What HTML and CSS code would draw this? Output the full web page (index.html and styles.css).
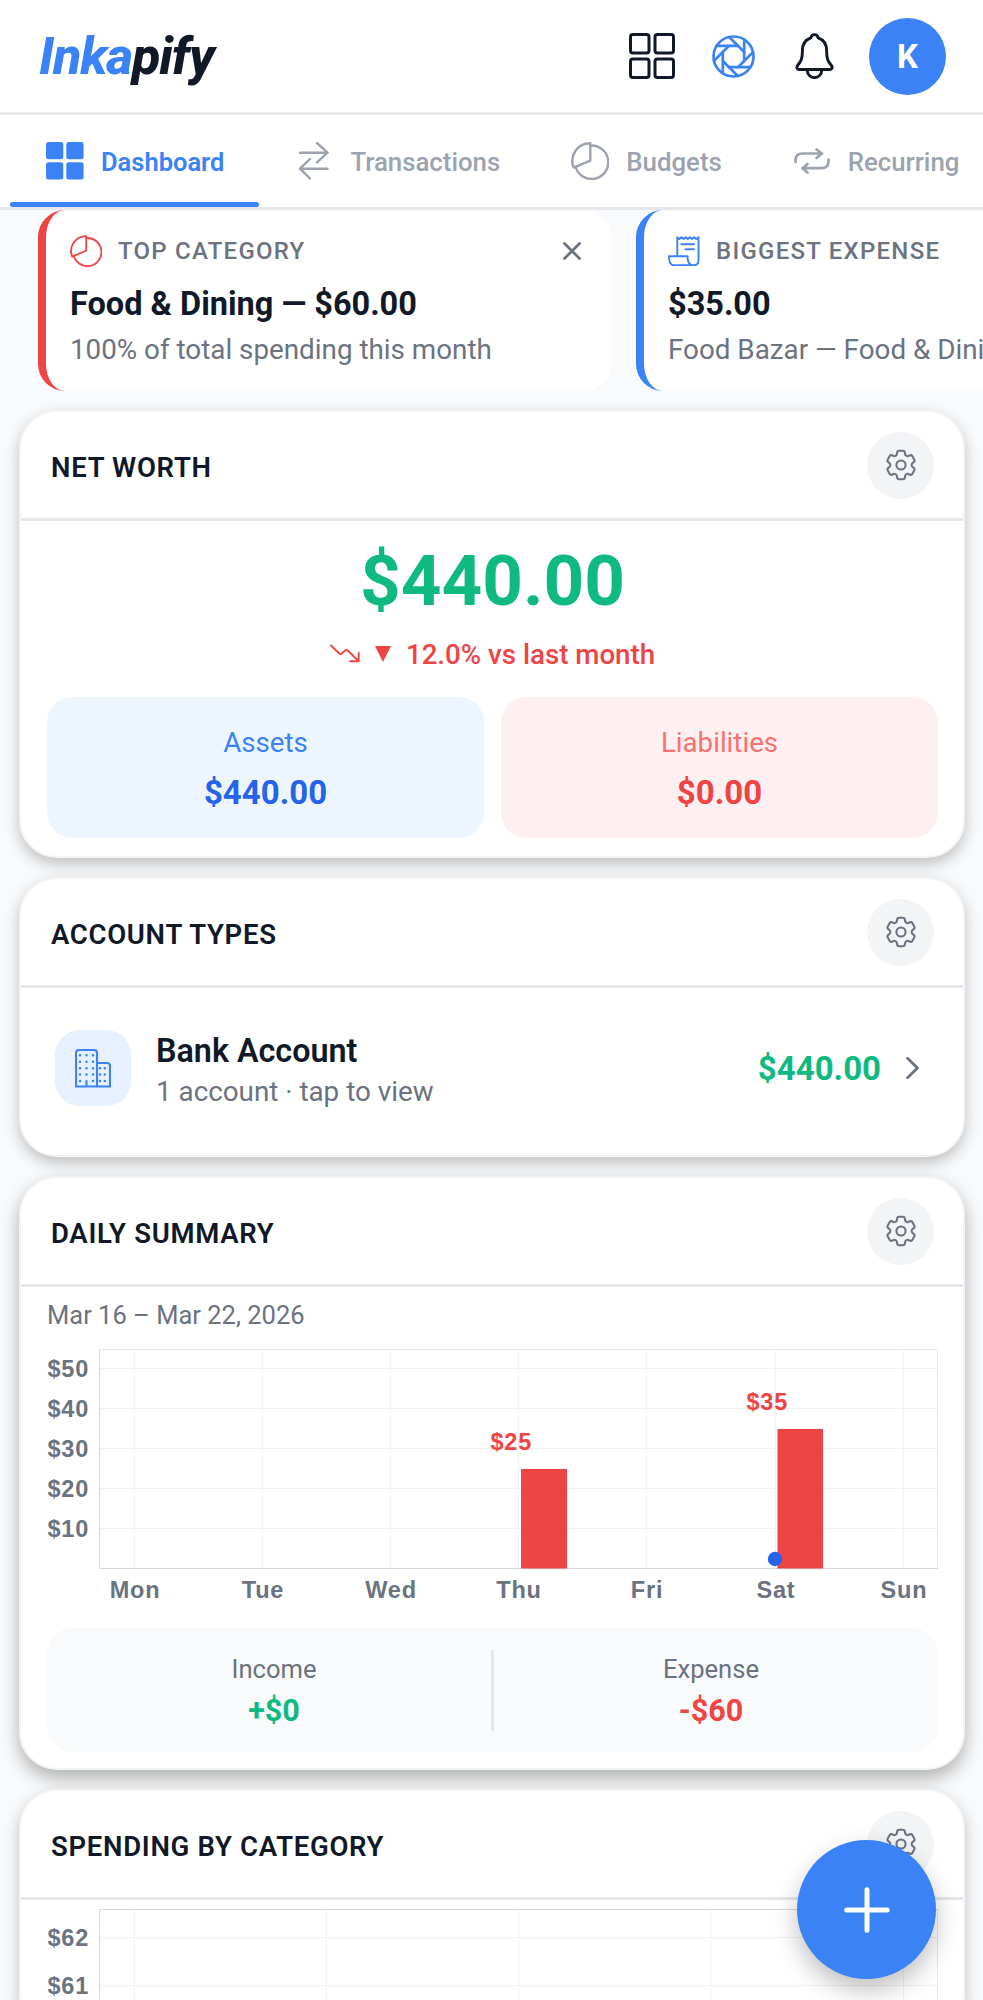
FILE: index.html
```html
<!DOCTYPE html>
<html lang="en">
<head>
  <meta charset="UTF-8" />
  <meta name="viewport" content="width=device-width, initial-scale=1.0"/>
  <title>Inkapify</title>
  <link rel="stylesheet" href="styles.css">
</head>
<body>
  <svg class="sprite" width="0" height="0">
    <symbol id="gear" viewBox="0 0 24 24">
      <path d="M9.594 3.94c.09-.542.56-.94 1.11-.94h2.593c.55 0 1.02.398 1.11.94l.213 1.281c.063.374.313.686.645.87.074.04.147.083.22.127.325.196.72.257 1.075.124l1.217-.456a1.125 1.125 0 0 1 1.37.49l1.296 2.247a1.125 1.125 0 0 1-.26 1.431l-1.003.827c-.293.241-.438.613-.43.992a7.723 7.723 0 0 1 0 .255c-.008.378.137.75.43.991l1.004.827c.424.35.534.955.26 1.43l-1.298 2.247a1.125 1.125 0 0 1-1.369.491l-1.217-.456c-.355-.133-.75-.072-1.076.124a6.47 6.47 0 0 1-.22.128c-.331.183-.581.495-.644.869l-.213 1.281c-.09.543-.56.94-1.11.94h-2.594c-.55 0-1.019-.398-1.11-.94l-.213-1.281c-.062-.374-.312-.686-.644-.87a6.52 6.52 0 0 1-.22-.127c-.325-.196-.72-.257-1.076-.124l-1.217.456a1.125 1.125 0 0 1-1.369-.49l-1.297-2.247a1.125 1.125 0 0 1 .26-1.431l1.004-.827c.292-.24.437-.613.43-.991a6.932 6.932 0 0 1 0-.255c.007-.38-.138-.751-.43-.992l-1.004-.827a1.125 1.125 0 0 1-.26-1.43l1.297-2.247a1.125 1.125 0 0 1 1.37-.491l1.216.456c.356.133.751.072 1.076-.124.072-.044.146-.086.22-.128.332-.183.582-.495.644-.869l.214-1.28Z"/>
      <circle cx="12" cy="12" r="2.9"/>
    </symbol>
    <symbol id="pie" viewBox="0 0 38 38">
      <path d="M19.3 18.7V1.3A17.7 17.7 0 0 0 2.6 25.6Z"/>
      <path d="M19.3 3.6A16.7 16.7 0 1 1 4.6 25"/>
    </symbol>
  </svg>

  <header class="header">
    <div class="logo"><span>Inka</span>pify</div>
    <div class="header-icons">
      <svg class="icon dark" width="46" height="46" viewBox="0 0 46 46" stroke-width="3">
        <rect x="1.5" y="1.5" width="18.5" height="18.5" rx="2.5"/>
        <rect x="26" y="1.5" width="18.5" height="18.5" rx="2.5"/>
        <rect x="1.5" y="26" width="18.5" height="18.5" rx="2.5"/>
        <rect x="26" y="26" width="18.5" height="18.5" rx="2.5"/>
      </svg>
      <svg class="icon blue" width="43" height="43" viewBox="-21.5 -21.5 43 43" stroke-width="2.7">
        <circle r="20"/>
        <path id="blade" d="M4.4-10.7H-16.9"/>
        <use href="#blade" transform="rotate(45)"/>
        <use href="#blade" transform="rotate(90)"/>
        <use href="#blade" transform="rotate(135)"/>
        <use href="#blade" transform="rotate(180)"/>
        <use href="#blade" transform="rotate(225)"/>
        <use href="#blade" transform="rotate(270)"/>
        <use href="#blade" transform="rotate(315)"/>
      </svg>
      <svg class="icon dark" width="39" height="46" viewBox="0 0 39 46" stroke-width="2.9">
        <path d="M19.5 1.6c-2.3 0-3.3 1.5-3.7 3.3C10.5 6.8 7.4 11.3 7.4 17.500c0 8.500-1.300 10.500-4.500 14.500C1 34.500 1.900 36.500 4 36.500h31c2.100 0 3-2 1.100-4.500-3.200-4-4.500-6-4.500-14.500 0-6.200-3.100-10.700-8.400-12.600-.4-1.800-1.400-3.300-3.700-3.300Z"/>
        <path d="M12.3 36.8v.8a7.2 7 0 0 0 14.4 0v-.8"/>
      </svg>
      <div class="avatar">K</div>
    </div>
  </header>

  <nav class="tabs">
    <a class="tab active">
      <svg width="38" height="38" viewBox="0 0 38 38" fill="currentColor">
        <rect width="17.3" height="17.3" rx="2.5"/>
        <rect x="20.3" width="17.3" height="17.3" rx="2.5"/>
        <rect y="20.3" width="17.3" height="17.3" rx="2.5"/>
        <rect x="20.3" y="20.3" width="17.3" height="17.3" rx="2.5"/>
      </svg>
      <span>Dashboard</span>
    </a>
    <a class="tab">
      <svg class="icon" width="38" height="38" viewBox="-4 0 38 38" stroke-width="2.4">
        <path d="M1 10.7H28.5M18 1L28.5 10.7L18 20.3M28.5 26.7H1M11 17L1 26.7L11 36.5"/>
      </svg>
      <span>Transactions</span>
    </a>
    <a class="tab">
      <svg class="icon" width="38" height="38" stroke-width="2.4"><use href="#pie"/></svg>
      <span>Budgets</span>
    </a>
    <a class="tab">
      <svg class="icon" width="38" height="38" viewBox="-1.5 -6.5 38 38" stroke-width="2.7">
        <path d="M1 13.5V12Q1 5 8 5H27.5M22 1L27.5 5L22 9.5M34 11V12.5Q34 19.7 27 19.7H8M13 15.5L8 19.7L13 24"/>
      </svg>
      <span>Recurring</span>
    </a>
  </nav>

  <div class="insights">
    <div class="insight red-edge">
      <div class="insight-top">
        <svg class="icon red" width="32" height="32" stroke-width="2.2"><use href="#pie"/></svg>
        <span>TOP CATEGORY</span>
        <svg class="icon close" width="18" height="18" viewBox="0 0 18 18" stroke-width="2.8"><path d="M1.5 1.5l15 15M16.5 1.5l-15 15"/></svg>
      </div>
      <div class="insight-title">Food &amp; Dining — $60.00</div>
      <div class="insight-sub">100% of total spending this month</div>
    </div>
    <div class="insight blue-edge">
      <div class="insight-top">
        <svg class="icon blue" width="32" height="30" viewBox="0 0 32 30" stroke-width="1.9">
          <path d="M9.3 20V1.2l2.1 1.8 2.1-1.8 2.1 1.8 2.1-1.8 2.1 1.8 2.1-1.8 2.1 1.8 2.1-1.8 2.1 1.8 2.3-1.8V24.5c0 3-1.8 4.7-4.7 4.7H5.8C2.4 29.2 1 25 1 20.3H19.5c0 5.2 1.5 8.9 5.5 8.9"/>
          <path d="M13.3 8.3H26M17.5 13.2H26"/>
        </svg>
        <span>BIGGEST EXPENSE</span>
      </div>
      <div class="insight-title">$35.00</div>
      <div class="insight-sub">Food Bazar — Food &amp; Dining</div>
    </div>
  </div>

  <section class="card net-worth">
    <div class="card-header">
      <h2>NET WORTH</h2>
      <button class="gear"><svg class="icon" width="38" height="38" stroke-width="1.3"><use href="#gear"/></svg></button>
    </div>
    <div class="card-body">
      <div class="total">$440.00</div>
      <div class="trend">
        <svg class="icon" width="30" height="20" viewBox="0 0 30 20" stroke-width="1.9"><path d="M1 1.5L9.5 9.8Q10.5 10.6 11.5 9.8L15.5 6.2Q16.5 5.4 17.5 6.2L28.5 17M28.7 9V17.3H20"/></svg>
        <svg width="16" height="16" viewBox="0 0 16 16" fill="currentColor"><path d="M0 0h16L8 16z"/></svg>
        <span>12.0% vs last month</span>
      </div>
      <div class="split">
        <div class="box assets"><p>Assets</p><b>$440.00</b></div>
        <div class="box liabilities"><p>Liabilities</p><b>$0.00</b></div>
      </div>
    </div>
  </section>

  <section class="card accounts">
    <div class="card-header">
      <h2>ACCOUNT TYPES</h2>
      <button class="gear"><svg class="icon" width="38" height="38" stroke-width="1.3"><use href="#gear"/></svg></button>
    </div>
    <div class="account-row">
      <div class="tile">
        <svg class="icon blue" width="36" height="39" viewBox="0 0 36 39" stroke-width="2.1">
          <path d="M1 37.5V4Q1 1 4 1H19Q22 1 22 4V37.5ZM22 14H32Q35 14 35 17V37.5H22M11.5 32V37"/>
          <path stroke-width="2.5" d="M5 6.3h0M11.5 6.3h0M18 6.3h0M5 12.7h0M11.5 12.7h0M18 12.7h0M5 19.2h0M11.5 19.2h0M18 19.2h0M5 25.6h0M11.5 25.6h0M18 25.6h0M5 32h0M18 32h0M25 19.2h0M29.8 19.2h0M25 25.6h0M29.8 25.6h0M25 32h0M29.8 32h0"/>
        </svg>
      </div>
      <div class="account-text">
        <div class="account-name">Bank Account</div>
        <div class="account-sub">1 account · tap to view</div>
      </div>
      <div class="account-total">$440.00</div>
      <svg class="icon chevron" width="13" height="22" viewBox="0 0 13 22" stroke-width="2.8"><path d="M1.5 1.3L11.5 11L1.5 20.7"/></svg>
    </div>
  </section>

  <section class="card daily">
    <div class="card-header">
      <h2>DAILY SUMMARY</h2>
      <button class="gear"><svg class="icon" width="38" height="38" stroke-width="1.3"><use href="#gear"/></svg></button>
    </div>
    <div class="card-body">
      <div class="range">Mar 16 – Mar 22, 2026</div>
      <svg class="chart" width="891" height="279" viewBox="0 0 891 279">
        <path class="grid" d="M87.5 16V235M215.5 16V235M343.5 16V235M471.5 16V235M599.5 16V235M728.5 16V235M856.5 16V235M52 35.5H891M52 75.5H891M52 115.5H891M52 155.5H891M52 195.5H891"/>
        <path class="frame" d="M52 16.5H890.5V235"/>
        <path class="axis" d="M52.5 16V235.5H891"/>
        <g class="labels">
          <text x="0.5" y="44">$50</text>
          <text x="0.5" y="84">$40</text>
          <text x="0.5" y="124">$30</text>
          <text x="0.5" y="164">$20</text>
          <text x="0.5" y="204">$10</text>
        </g>
        <g class="labels days">
          <text x="88" y="264.5">Mon</text>
          <text x="216" y="264.5">Tue</text>
          <text x="344" y="264.5">Wed</text>
          <text x="472" y="264.5">Thu</text>
          <text x="600" y="264.5">Fri</text>
          <text x="729" y="264.5">Sat</text>
          <text x="857" y="264.5">Sun</text>
        </g>
        <rect class="bar" x="474" y="136" width="46" height="99.5"/>
        <rect class="bar" x="730.5" y="96" width="45.5" height="139.5"/>
        <circle class="today" cx="728" cy="226" r="7.2"/>
        <g class="labels values">
          <text x="443.5" y="117">$25</text>
          <text x="699.5" y="76.5">$35</text>
        </g>
      </svg>
      <div class="summary">
        <div class="income"><p>Income</p><b>+$0</b></div>
        <div class="divider"></div>
        <div class="expense"><p>Expense</p><b>-$60</b></div>
      </div>
    </div>
  </section>

  <section class="card spending">
    <div class="card-header">
      <h2>SPENDING BY CATEGORY</h2>
      <button class="gear"><svg class="icon" width="38" height="38" stroke-width="1.3"><use href="#gear"/></svg></button>
    </div>
    <div class="card-body">
      <svg class="chart" width="891" height="100" viewBox="0 0 891 100">
        <path class="grid" d="M87.5 10V100M279.5 10V100M472 10V100M664 10V100M856.5 10V100M52 37.5H891M52 85.5H891"/>
        <path class="frame" d="M890.5 10V100"/>
        <path class="axis" d="M52.5 100V9.5H891"/>
        <g class="labels">
          <text x="0.5" y="46">$62</text>
          <text x="0.5" y="94">$61</text>
        </g>
      </svg>
    </div>
  </section>

  <button class="fab">
    <svg class="icon" width="46" height="46" viewBox="0 0 46 46" stroke-width="5"><path d="M23 2.8V43.2M2.8 23H43.2"/></svg>
  </button>
</body>
</html>
```

FILE: styles.css
```css
* {
  box-sizing: border-box;
}
body {
  margin: 0;
  height: 2000px;
  overflow: hidden;
  background: #f9fafb;
  font-family: Roboto, sans-serif;
  color: #111827;
}
p, h2 {
  margin: 0;
}
button {
  border: none;
  padding: 0;
}
.sprite {
  position: absolute;
}
svg {
  display: block;
  flex: none;
}
.icon {
  fill: none;
  stroke: currentColor;
  stroke-linecap: round;
  stroke-linejoin: round;
}
.dark {
  color: #111827;
}
.blue {
  color: #3b82f6;
}
.red {
  color: #ef4444;
}

/* header */
.header {
  display: flex;
  justify-content: space-between;
  align-items: center;
  height: 115px;
  padding: 0 37px 0 39px;
  background: #fff;
  border-bottom: 3px solid #e5e7eb;
}
.logo {
  padding-top: 1px;
  font-size: 52px;
  line-height: 60px;
  font-weight: 800;
  font-style: italic;
  letter-spacing: -1.1px;
}
.logo span {
  color: #3b82f6;
}
.header-icons {
  display: flex;
  align-items: center;
}
.header-icons svg + svg {
  margin-left: 37px;
}
.header-icons svg:nth-child(3) {
  margin-left: 40px;
}
.avatar {
  width: 77px;
  height: 77px;
  margin-left: 35px;
  border-radius: 50%;
  background: #3b82f6;
  color: #fff;
  font-size: 33px;
  font-weight: 700;
  line-height: 78px;
  text-align: center;
}

/* tabs */
.tabs {
  display: flex;
  height: 95px;
  padding-left: 10px;
  background: #fff;
  border-bottom: 3px solid #e5e7eb;
  overflow: hidden;
}
.tab {
  position: relative;
  flex: none;
  display: flex;
  align-items: center;
  gap: 17px;
  padding: 0 35px 0 36px;
  color: #9ca3af;
  font-size: 25.8px;
  font-weight: 500;
}
.tab span {
  padding-top: 2px;
}
.tab.active {
  color: #3b82f6;
  font-size: 25.5px;
  font-weight: 600;
}
.tab.active::after {
  content: "";
  position: absolute;
  left: 0;
  right: 0;
  bottom: 0;
  height: 5px;
  border-radius: 3px;
  background: #3b82f6;
}

/* insights */
.insights {
  display: flex;
  gap: 25px;
  padding-left: 38px;
  overflow: hidden;
}
.insight {
  flex: none;
  width: 573px;
  height: 181px;
  padding: 24px 30px 0 24px;
  border-left: 8px solid;
  border-radius: 27px;
  background: #fff;
}
.red-edge {
  border-color: #ef4444;
}
.blue-edge {
  border-color: #3b82f6;
}
.insight-top {
  display: flex;
  align-items: center;
  gap: 16px;
  height: 34px;
  color: #6b7280;
  font-size: 24px;
  font-weight: 500;
  letter-spacing: 1.25px;
}
.insight-top .close {
  margin-left: auto;
}
.insight-title {
  margin-top: 15px;
  font-size: 32.5px;
  line-height: 42px;
  font-weight: 700;
}
.insight-sub {
  margin-top: 7px;
  color: #6b7280;
  font-size: 27.8px;
  line-height: 36px;
  white-space: nowrap;
}

/* cards */
.card {
  margin: 19px 18px 0 19px;
  border: 2px solid #f3f4f6;
  border-radius: 38px;
  background: #fff;
  box-shadow: 0 6px 15px rgba(0, 0, 0, 0.24);
}
.card-header {
  display: flex;
  justify-content: space-between;
  align-items: center;
  height: 109px;
  padding: 0 29px 0 30px;
  border-bottom: 3px solid #e5e7eb;
}
.card-header h2 {
  padding-top: 4px;
  font-size: 27.5px;
  font-weight: 600;
  letter-spacing: 0.7px;
}
.gear {
  display: flex;
  align-items: center;
  justify-content: center;
  width: 67px;
  height: 67px;
  border-radius: 50%;
  background: #f3f4f6;
  color: #6b7280;
}
.card-body {
  padding: 0 25px 0 26px;
}
.net-worth {
  height: 448px;
}
.total {
  padding-top: 18px;
  color: #10b981;
  font-size: 71px;
  line-height: 84px;
  font-weight: 700;
  text-align: center;
}
.trend {
  display: flex;
  justify-content: center;
  align-items: center;
  height: 36px;
  margin-top: 13px;
  color: #ef4444;
  font-size: 27.7px;
  font-weight: 500;
}
.trend svg {
  margin-right: 15px;
}
.split {
  display: grid;
  grid-template-columns: 1fr 1fr;
  gap: 17px;
  margin-top: 25px;
}
.box {
  height: 141px;
  padding-top: 29px;
  border-radius: 25px;
  text-align: center;
}
.box p {
  font-size: 27.7px;
  line-height: 34px;
}
.box b {
  display: block;
  margin-top: 12px;
  font-size: 33px;
  line-height: 42px;
  font-weight: 700;
}
.assets {
  background: #edf6ff;
  color: #3b82f6;
}
.assets b {
  color: #2563eb;
}
.liabilities {
  background: #feeff0;
  color: #f87171;
}
.liabilities b {
  color: #ef4444;
}

/* account types */
.accounts {
  height: 280px;
}
.account-row {
  display: flex;
  height: 118px;
  padding: 42px 44px 0 34px;
}
.tile {
  display: flex;
  align-items: center;
  justify-content: center;
  width: 76px;
  height: 76px;
  border-radius: 25px;
  background: #e6f0ff;
}
.account-text {
  flex: 1;
  padding-left: 25px;
}
.account-name {
  font-size: 32.3px;
  line-height: 42px;
  font-weight: 600;
}
.account-sub {
  color: #6b7280;
  font-size: 27.8px;
  line-height: 40px;
}
.account-total {
  color: #10b981;
  font-size: 33px;
  line-height: 78px;
  font-weight: 700;
}
.chevron {
  margin: 27px 0 0 25px;
  color: #6b7280;
}

/* daily summary */
.daily {
  height: 594px;
  box-shadow: 0 8px 18px rgba(0, 0, 0, 0.3);
}
.range {
  padding-top: 11px;
  padding-bottom: 1px;
  color: #6b7280;
  font-size: 25.5px;
  line-height: 34px;
}
.grid {
  fill: none;
  stroke: #f1f1f2;
}
.frame {
  fill: none;
  stroke: #e6e7e9;
}
.axis {
  fill: none;
  stroke: #d6d7d9;
}
.labels {
  fill: #6b7280;
  font-family: "Liberation Sans", sans-serif;
  font-size: 23.5px;
  font-weight: 700;
  letter-spacing: 0.8px;
}
.days {
  text-anchor: middle;
}
.values,
.bar {
  fill: #ef4444;
}
.today {
  fill: #2563eb;
}
.summary {
  display: flex;
  align-items: center;
  height: 124px;
  margin-top: 16px;
  padding: 0 10px;
  border-radius: 25px;
  background: #f9fafb;
}
.income,
.expense {
  flex: 1;
  padding-top: 3px;
  text-align: center;
}
.summary p {
  color: #6b7280;
  font-size: 25.6px;
  line-height: 34px;
}
.summary b {
  display: block;
  margin-top: 5px;
  font-size: 30.5px;
  line-height: 40px;
  font-weight: 700;
}
.income b {
  color: #10b981;
}
.expense b {
  color: #ef4444;
}
.divider {
  width: 3px;
  height: 81px;
  background: #e5e7eb;
}

/* runs off the bottom of the screen, under the add button */
.spending {
  height: 211px;
  border-bottom: none;
  border-radius: 38px 38px 0 0;
}

/* floating add button */
.fab {
  position: absolute;
  left: 797px;
  top: 1840px;
  display: flex;
  align-items: center;
  justify-content: center;
  width: 139px;
  height: 139px;
  border-radius: 50%;
  background: #3b82f6;
  color: #fff;
  box-shadow: 0 11px 24px rgba(0, 0, 0, 0.25);
}
```
